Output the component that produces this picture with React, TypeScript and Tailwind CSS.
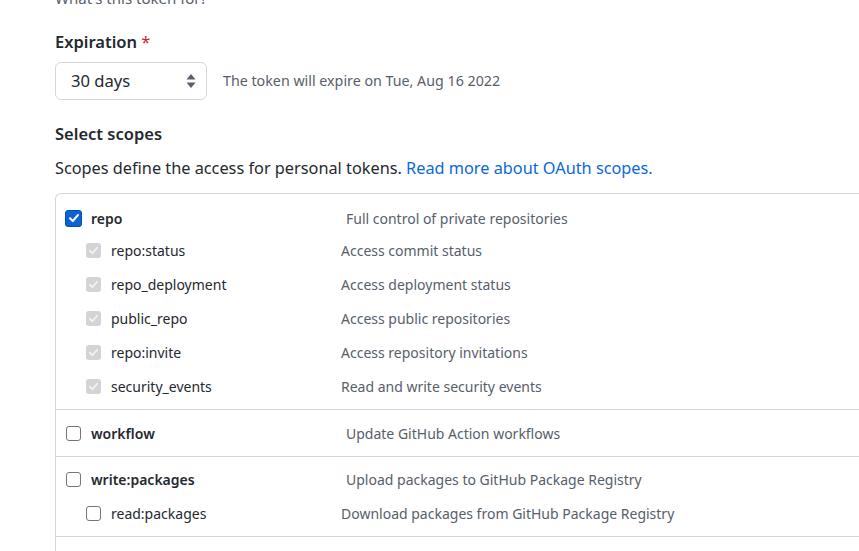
import React from "react";

const font = "font-['Noto_Sans','Open_Sans',sans-serif]";

type Scope = { name: string; desc: string; checked?: boolean; disabled?: boolean; children?: Scope[] };

const GROUPS: Scope[] = [
  {
    name: "repo",
    desc: "Full control of private repositories",
    checked: true,
    children: [
      { name: "repo:status", desc: "Access commit status", disabled: true },
      { name: "repo_deployment", desc: "Access deployment status", disabled: true },
      { name: "public_repo", desc: "Access public repositories", disabled: true },
      { name: "repo:invite", desc: "Access repository invitations", disabled: true },
      { name: "security_events", desc: "Read and write security events", disabled: true },
    ],
  },
  { name: "workflow", desc: "Update GitHub Action workflows" },
  {
    name: "write:packages",
    desc: "Upload packages to GitHub Package Registry",
    children: [{ name: "read:packages", desc: "Download packages from GitHub Package Registry" }],
  },
];

function Box({ checked, disabled }: { checked?: boolean; disabled?: boolean }) {
  if (checked) {
    return (
      <span className="w-[17px] h-[17px] rounded-[3px] bg-[#0b62d6] border border-[#0a4ea8] flex items-center justify-center shrink-0">
        <svg width="12" height="12" viewBox="0 0 12 12" fill="none">
          <path d="M2 6.3 4.8 9 10 3" stroke="white" strokeWidth="2" strokeLinecap="round" strokeLinejoin="round" />
        </svg>
      </span>
    );
  }
  if (disabled) {
    return (
      <span className="w-[15px] h-[15px] rounded-[3px] bg-[#d4d4d4] flex items-center justify-center shrink-0">
        <svg width="11" height="11" viewBox="0 0 12 12" fill="none">
          <path d="M2 6.3 4.8 9 10 3" stroke="#f2f2f2" strokeWidth="2" strokeLinecap="round" strokeLinejoin="round" />
        </svg>
      </span>
    );
  }
  return <span className="block w-[15px] h-[15px] rounded-[3px] border border-[#767676] bg-white shrink-0" />;
}

function Group({ scope, tall }: { scope: Scope; tall?: boolean }) {
  return (
    <div className="border-b border-[#d0d7de]">
      <div className={`${tall ? "h-[46px]" : scope.children?.length === 5 ? "h-[30px] mt-[9px]" : "h-[34px] mt-[5px]"} flex items-center`}>
        <div className="w-[290px] flex items-center pl-[9px] gap-[9px]">
          <span className={scope.checked ? "flex" : "flex mx-px"}>
            <Box checked={scope.checked} />
          </span>
          <span className="font-semibold text-[14px] text-[#24292f]">{scope.name}</span>
        </div>
        <span className="text-[14px] text-[#57606a]">{scope.desc}</span>
      </div>
      {scope.children && (
        <div className="pb-[6px]">
          {scope.children.map((c) => (
            <div key={c.name} className="h-[34px] flex items-center">
              <div className="w-[285px] flex items-center pl-[30px] gap-[10px]">
                <Box disabled={c.disabled} />
                <span className="text-[14px] text-[#24292f]">{c.name}</span>
              </div>
              <span className="text-[14px] text-[#57606a]">{c.desc}</span>
            </div>
          ))}
        </div>
      )}
    </div>
  );
}

export default function App() {
  return (
    <div className={`${font} bg-white w-[859px] h-[551px] overflow-hidden pl-[55px]`}>
      <p className="-mt-[12px] h-[20px] leading-[20px] text-[15px] text-[#57606a]">What's this token for?</p>

      {/* Expiration */}
      <div className="mt-[22px] h-[24px] leading-[24px] text-[16.5px] font-semibold text-[#24292f]">
        Expiration <span className="text-[#cf222e] font-normal">*</span>
      </div>
      <div className="mt-[8px] flex items-center gap-[16px]">
        <div className="w-[152px] h-[38px] rounded-[6px] border border-[#d0d7de] flex items-center justify-between pl-[15px] pr-[10px] text-[16.6px] text-[#24292f]">
          <span>30 days</span>
          <svg width="10" height="16" viewBox="0 0 10 16" fill="#57606a">
            <path d="M5 1 9.5 6.5H0.5Z" />
            <path d="M5 15 9.5 9.5H0.5Z" />
          </svg>
        </div>
        <span className="text-[14.25px] text-[#57606a]">The token will expire on Tue, Aug 16 2022</span>
      </div>

      {/* Scopes */}
      <div className="mt-[22px] h-[24px] leading-[24px] text-[16.5px] font-semibold text-[#24292f]">Select scopes</div>
      <p className="mt-[9px] h-[26px] leading-[26px] text-[16.3px] text-[#24292f]">
        Scopes define the access for personal tokens. <span className="text-[#0969da]">Read more about OAuth scopes.</span>
      </p>

      <div className="mt-[12px] border-t border-l border-[#d0d7de] rounded-tl-[6px] w-[900px]">
        <Group scope={GROUPS[0]} />
        <Group scope={GROUPS[1]} tall />
        <Group scope={GROUPS[2]} />
        <div className="h-[40px]" />
      </div>
    </div>
  );
}
